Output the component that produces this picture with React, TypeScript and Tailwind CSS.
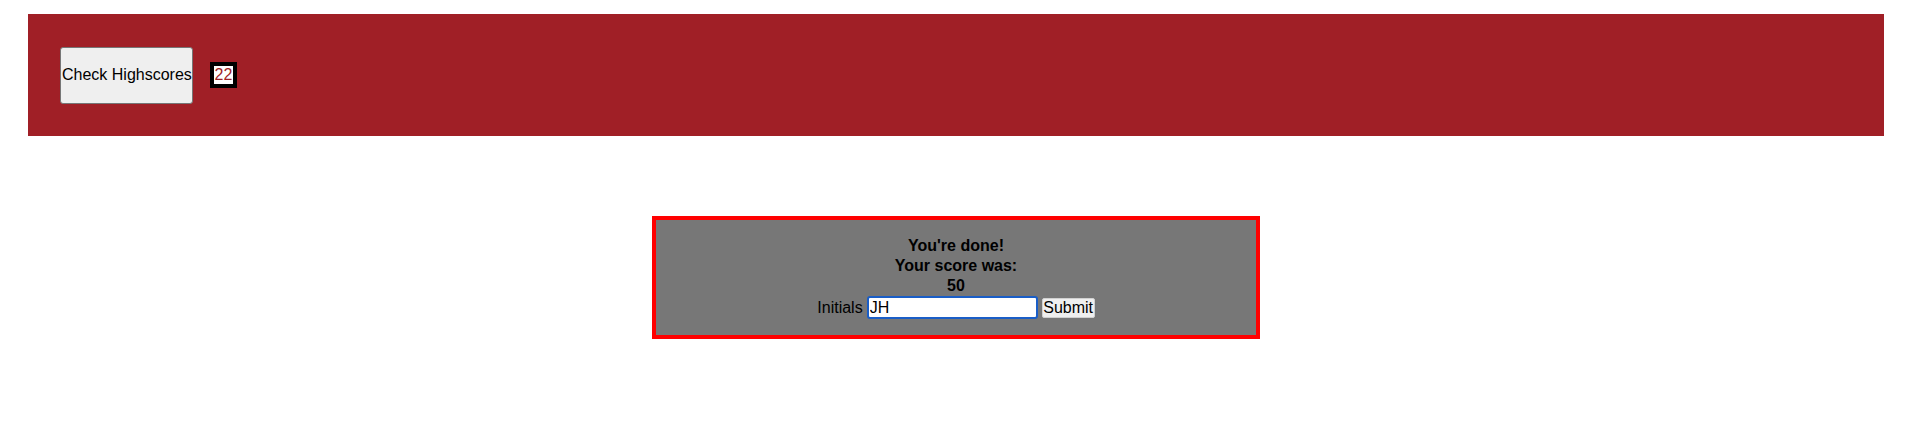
import React from "react";

export default function App() {
  return (
    <div className="w-[1915px] h-[430px] bg-white text-black" style={{ fontFamily: '"Liberation Sans", Arial, sans-serif' }}>
      <header className="ml-[28px] mr-[31px] mt-[14px] h-[122px] bg-[#a01f26] px-[32px] flex items-center">
        <button className="h-[57px] w-[133px] px-[1px] text-[16px] leading-none border border-[#767676] rounded-[3px] bg-[#efefef] text-black whitespace-nowrap">
          Check Highscores
        </button>
        <span className="ml-[17px] border-4 border-black bg-white text-[#a01f26] text-[16px] leading-[18px] w-[27px] h-[26px] flex items-center justify-center">
          22
        </span>
      </header>
      <div className="mt-[80px] ml-[652px] w-[608px] h-[123px] border-4 border-[#ff0000] bg-[#777777] pt-[16px] text-center">
        <div className="font-bold text-[16px] leading-[20px]">You're done!</div>
        <div className="font-bold text-[16px] leading-[20px]">Your score was:</div>
        <div className="font-bold text-[16px] leading-[20px]">50</div>
        <div className="flex items-center justify-center text-[16px] leading-[20px] h-[23px]">
          <span>Initials</span>
          <input
            defaultValue="JH"
            className="ml-[4px] w-[171px] h-[23px] bg-white border-2 border-[#1a5ec7] rounded-[3px] px-[1px] text-[16px] text-black outline-none"
            style={{ fontFamily: '"Liberation Sans", Arial, sans-serif' }}
          />
          <button className="ml-[4px] h-[20px] w-[53px] bg-[#efefef] border border-[#d0d0d0] rounded-[2px] text-[16px] leading-none text-black px-0">
            Submit
          </button>
        </div>
      </div>
    </div>
  );
}
